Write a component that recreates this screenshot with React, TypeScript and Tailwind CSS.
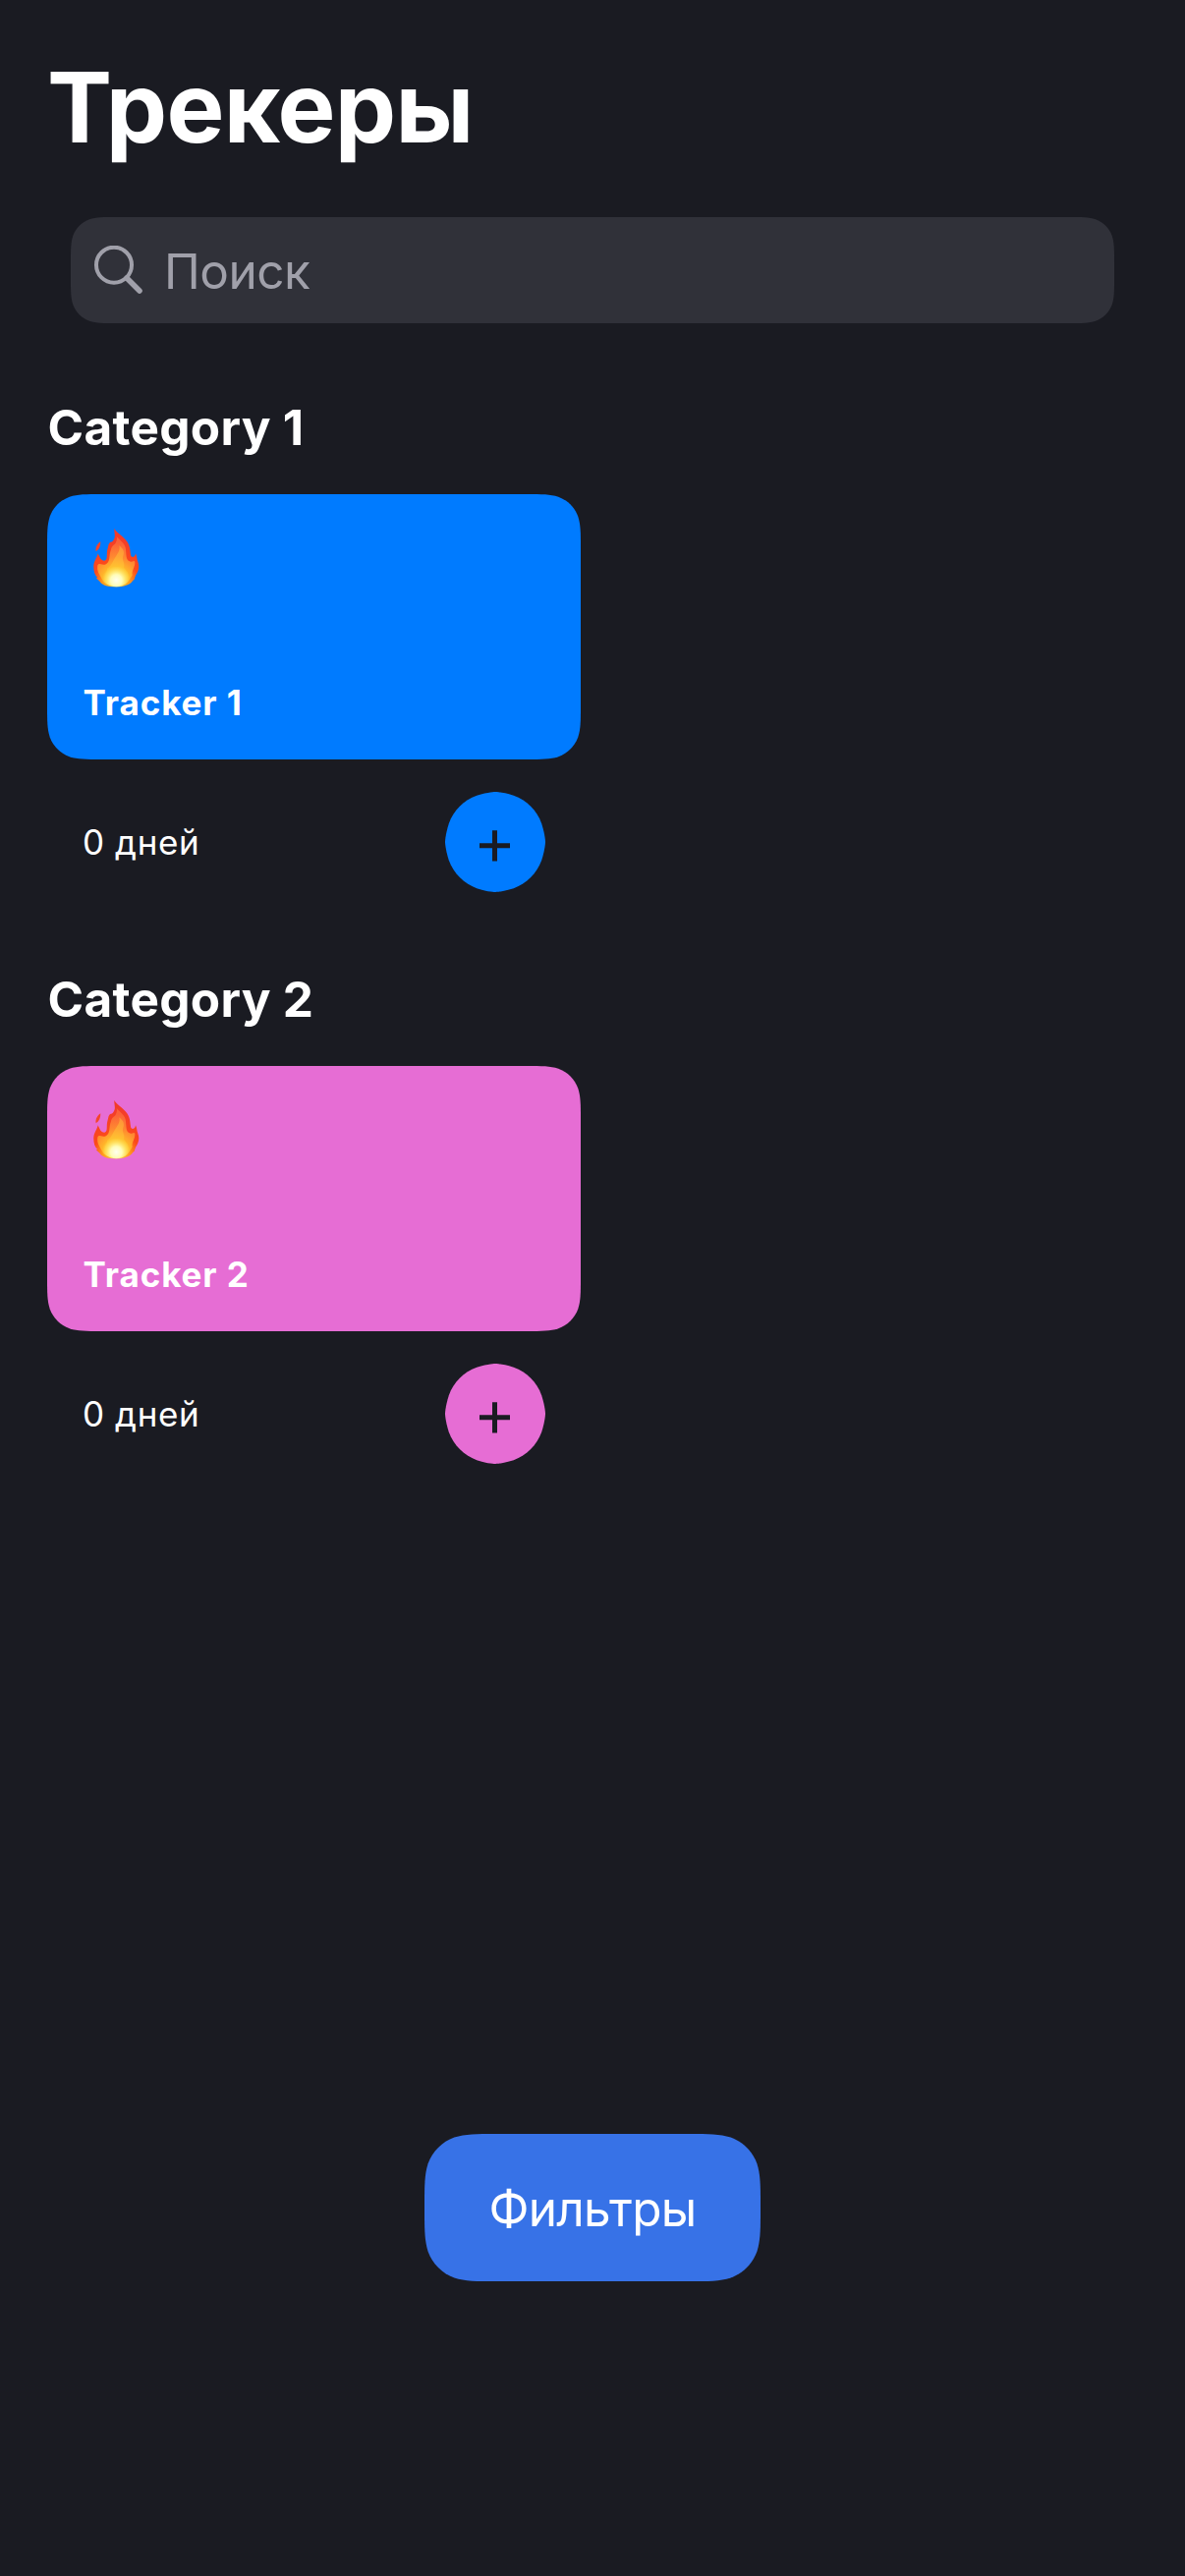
import React from "react";

// Outline of a rounded rectangle with continuous (smoothed) corners.
function smoothRect(w: number, h: number, r: number) {
  const mx = w / 2;
  const my = h / 2;
  const a = 1.52866483 * r;
  const b = 1.08849296 * r;
  const c = 0.86840694 * r;
  const d = 0.63149379 * r;
  const e = 0.07491139 * r;
  const f = 0.37282383 * r;
  const g = 0.16905956 * r;
  const ax = Math.min(a, mx);
  const ay = Math.min(a, my);
  const bx = Math.min(b, mx);
  const by = Math.min(b, my);
  return (
    `M${ax} 0 L${w - ax} 0 C${w - bx} 0 ${w - c} 0 ${w - d} ${e}` +
    `C${w - f} ${g} ${w - g} ${f} ${w - e} ${d} C${w} ${c} ${w} ${by} ${w} ${ay}` +
    `L${w} ${h - ay} C${w} ${h - by} ${w} ${h - c} ${w - e} ${h - d}` +
    `C${w - g} ${h - f} ${w - f} ${h - g} ${w - d} ${h - e} C${w - c} ${h} ${w - bx} ${h} ${w - ax} ${h}` +
    `L${ax} ${h} C${bx} ${h} ${c} ${h} ${d} ${h - e} C${f} ${h - g} ${g} ${h - f} ${e} ${h - d}` +
    `C0 ${h - c} 0 ${h - by} 0 ${h - ay} L0 ${ay} C0 ${by} 0 ${c} ${e} ${d}` +
    `C${g} ${f} ${f} ${g} ${d} ${e} C${c} 0 ${bx} 0 ${ax} 0Z`
  );
}

function smooth(w: number, h: number, r: number): React.CSSProperties {
  return { clipPath: `path("${smoothRect(w, h, r)}")` };
}

function Flame({ id }: { id: string }) {
  return (
    <svg className="block h-[60px] w-[47px]" viewBox="0 0 141 180" aria-hidden="true">
      <defs>
        <radialGradient id={`${id}-outer`} gradientUnits="userSpaceOnUse" cx="70" cy="170" r="150">
          <stop offset="0" stopColor="#ffd83a" />
          <stop offset="0.28" stopColor="#ff9a1c" />
          <stop offset="0.48" stopColor="#fb4a1c" />
          <stop offset="1" stopColor="#f23a2a" />
        </radialGradient>
        <radialGradient id={`${id}-inner`} gradientUnits="userSpaceOnUse" cx="70" cy="160" r="118">
          <stop offset="0" stopColor="#ffef5a" />
          <stop offset="0.38" stopColor="#ffb52a" />
          <stop offset="0.62" stopColor="#ff8a30" />
          <stop offset="1" stopColor="#fb6038" />
        </radialGradient>
        <radialGradient id={`${id}-core`} gradientUnits="userSpaceOnUse" cx="70" cy="158" r="44">
          <stop offset="0" stopColor="#fffff0" />
          <stop offset="0.4" stopColor="#fffcb8" />
          <stop offset="1" stopColor="#ffe94a" stopOpacity="0" />
        </radialGradient>
      </defs>
      <path d="M22 40 C13 46 5 58 8 70 C18 64 22 54 22 40Z" fill="#f4442c" />
      <path
        d="M64 0 C72 14 91 23 103 40 C114 56 112 74 115 84 C121 90 128 86 129 76 C134 86 132 92 136 101 C142 116 138 132 129 143 C128 149 124 151 127 153 L120 160 C112 172 92 178 70 178 C46 178 28 174 20 162 L8 151 L13 150 C4 142 0 128 1 112 C3 96 12 88 14 76 C20 88 22 98 34 98 C46 94 38 78 44 60 C47 48 46 48 51 42 C60 42 63 34 65 28 C67 18 63 8 64 0Z"
        fill={`url(#${id}-outer)`}
      />
      <path
        d="M71 24 C80 36 98 44 99 64 C101 84 99 98 114 101 C124 102 124 96 127 102 C128 118 116 128 119 142 C110 162 96 174 70 176 C44 174 32 168 25 152 C18 138 10 130 13 112 C18 104 22 112 36 110 C54 102 46 84 54 64 C56 52 62 52 68 44 C72 36 73 30 71 24Z"
        fill={`url(#${id}-inner)`}
      />
      <path
        d="M79 52 C91 62 96 70 91 84 C86 96 98 106 93 118 C99 130 110 134 106 150 C98 170 88 174 70 174 C50 174 36 168 34 152 C32 142 42 136 42 122 C54 116 60 98 68 86 C76 74 82 66 79 52Z"
        fill="#ffd23d"
        opacity="0.4"
      />
      <ellipse cx="70" cy="147" rx="42" ry="31" fill={`url(#${id}-core)`} />
    </svg>
  );
}

function PlusIcon() {
  return (
    <svg className="block h-[102px] w-[102px]" viewBox="0 0 102 102" aria-hidden="true">
      <path d="M35 54.8H66M50.5 39.2V70.4" stroke="#1a1b22" strokeWidth="5" fill="none" />
    </svg>
  );
}

type Tracker = { id: string; category: string; name: string; color: string; gap: string };

const trackers: Tracker[] = [
  { id: "first", category: "Category 1", name: "Tracker 1", color: "bg-[#007bff]", gap: "mt-[76px]" },
  { id: "second", category: "Category 2", name: "Tracker 2", color: "bg-[#e66dd4]", gap: "mt-[79px]" },
];

function TrackerSection({ t }: { t: Tracker }) {
  return (
    <section className={`${t.gap} w-[543px]`}>
      <h2 className="whitespace-nowrap pl-[0.5px] text-[49.5px] font-bold leading-[60px] tracking-[0.3px]">
        {t.category}
      </h2>
      <div
        className={`mt-[38px] flex h-[270px] flex-col justify-between pb-[36px] pl-[36.5px] pt-[35px] ${t.color}`}
        style={smooth(543, 270, 36)}
      >
        <div className="pl-[10px]">
          <Flame id={t.id} />
        </div>
        <p className="text-[35px] font-bold leading-[44px] tracking-[0.9px]">{t.name}</p>
      </div>
      <div className="mt-[33px] flex items-center justify-between pl-9 pr-9">
        <span className="text-[35px] leading-[44px] tracking-[0.6px]">0 дней</span>
        <button className={`h-[102px] w-[102px] ${t.color}`} style={smooth(102, 102, 51)} aria-label="+">
          <PlusIcon />
        </button>
      </div>
    </section>
  );
}

export default function App() {
  return (
    <main className="flex h-[2622px] w-[1206px] flex-col overflow-hidden bg-[#1a1b22] px-12 pt-[49px] font-['Inter',sans-serif] text-white">
      <h1 className="text-[99px] font-bold leading-[120px] tracking-[-0.7px]">Трекеры</h1>
      <div
        className="ml-6 mt-[52px] flex h-[108px] w-[1062px] items-center bg-[#303139] text-[#a0a0aa]"
        style={smooth(1062, 108, 30)}
      >
        <svg className="ml-6 h-[50px] w-[50px] shrink-0" viewBox="0 0 50 50" fill="none" stroke="currentColor" aria-hidden="true">
          <circle cx="20" cy="19.7" r="18" strokeWidth="4" />
          <path d="M33 33L46 46" strokeWidth="5.6" strokeLinecap="round" />
        </svg>
        <span className="ml-[21px] mt-[2px] text-[49.5px] leading-[60px] tracking-[-0.5px]">Поиск</span>
      </div>
      {trackers.map((t) => (
        <TrackerSection key={t.id} t={t} />
      ))}
      <button
        className="mt-[682px] h-[150px] w-[342px] self-center bg-[#3772e7] pt-[2px] text-[49.5px] leading-[60px] tracking-[-0.7px]"
        style={smooth(342, 150, 48)}
      >
        Фильтры
      </button>
    </main>
  );
}
